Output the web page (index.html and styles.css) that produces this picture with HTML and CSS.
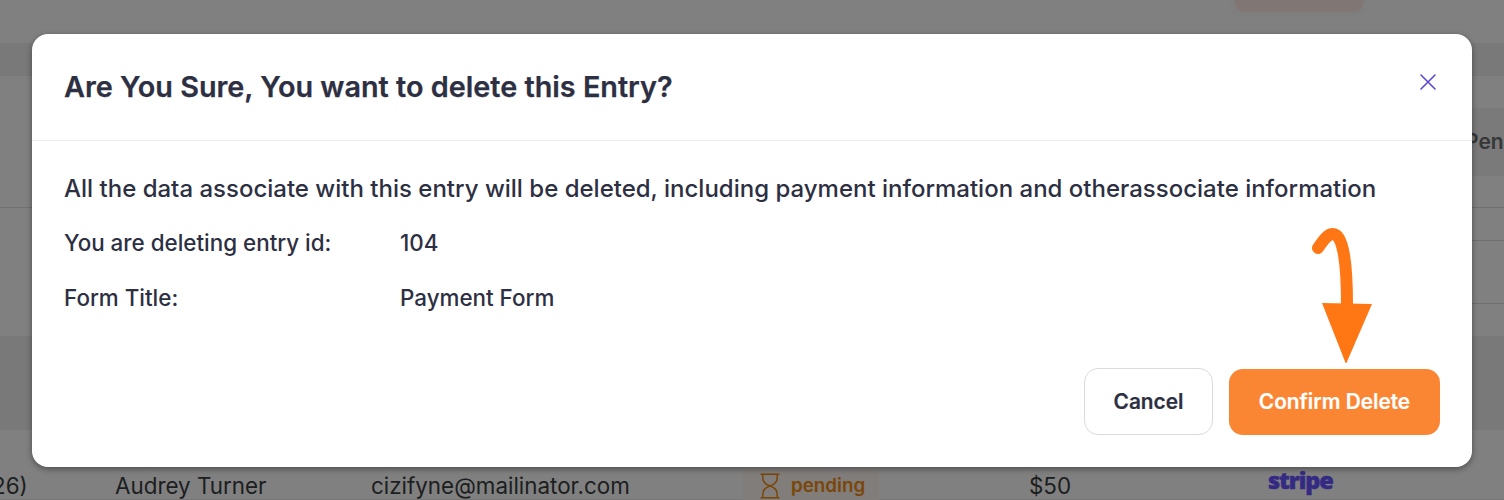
FILE: index.html
```html
<!DOCTYPE html>
<html lang="en">
<head>
<meta charset="utf-8">
<title>Delete entry</title>
<link rel="stylesheet" href="styles.css">
</head>
<body>
<div class="page">
  <div class="topbar"><span class="top-button"></span></div>
  <div class="strip"></div>
  <div class="stats">
    <div class="stats-left"></div>
    <div class="stats-right">
      <div class="stat-head">Pen</div>
      <div class="stat-gap"></div>
      <div class="stat-cell"></div>
      <div class="stat-cell tall"></div>
    </div>
  </div>
  <div class="table-head"></div>
  <div class="row">
    <span class="cell date">26)</span>
    <span class="cell name">Audrey Turner</span>
    <span class="cell mail">cizifyne@mailinator.com</span>
    <span class="cell status"><span class="badge">
      <svg class="hourglass" viewBox="0 0 20 26"><path d="M.5 1.2h19M.5 24.8h19M2.8 1.2v3.3c0 5 2.8 7.2 7.2 8.5 4.4-1.3 7.2-3.5 7.2-8.5V1.2M2.8 24.8v-3.3c0-5 2.8-7.2 7.2-8.5 4.4 1.3 7.2 3.5 7.2 8.5v3.3"/></svg>
      <span class="badge-text">pending</span></span></span>
    <span class="cell amount">$50</span>
    <span class="cell stripe">stripe</span>
  </div>
</div>
<div class="modal" role="dialog">
  <header class="modal-head">
    <h1 class="title">Are You Sure, You want to delete this Entry?</h1>
    <svg class="close" viewBox="0 0 16 16"><path d="M1 1l14 14M15 1L1 15"/></svg>
  </header>
  <div class="modal-body">
    <p class="notice">All the data associate with this entry will be deleted, including payment information and otherassociate information</p>
    <dl class="details">
      <dt class="label">You are deleting entry id:</dt><dd class="value">104</dd>
      <dt class="label">Form Title:</dt><dd class="value form">Payment Form</dd>
    </dl>
  </div>
  <footer class="actions">
    <button class="btn cancel"><span class="cancel-text">Cancel</span></button>
    <button class="btn confirm"><span class="confirm-text">Confirm Delete</span></button>
  </footer>
</div>
<svg class="arrow" viewBox="0 0 62 138"><path class="arrow-line" d="M8 23C14 14 18 9 23 9C34 9 37 43 37 80"/><path class="arrow-head" d="M12 78L62 79L36 139Z"/></svg>
</body>
</html>
```

FILE: styles.css
```css
* { box-sizing: border-box; }
body { margin: 0; width: 1504px; height: 500px; overflow: hidden; position: relative; font-family: Inter, "Liberation Sans", sans-serif; color: #2d2f42; }
.page { height: 500px; background: #808080; display: flex; flex-direction: column; }
.topbar { height: 43px; display: flex; justify-content: flex-end; padding-right: 140px; }
.top-button { width: 130px; height: 12px; background: #807774; border-radius: 0 0 12px 12px; box-shadow: 0 1px 4px #80777480; }
.strip { height: 33px; background: #797979; }
.stats { height: 260px; display: flex; }
.stats-left { flex: 1; height: 132px; border-bottom: 1px solid #717171; }
.stats-right { width: 64px; padding-top: 32px; }
.stat-head { height: 68px; background: #7a7a7a; padding-left: 25px; line-height: 67px; font-size: 21px; font-weight: 600; color: #363738; white-space: nowrap; overflow: hidden; }
.stat-gap { height: 32px; border-bottom: 1px solid #6e6e6e; }
.stat-cell { height: 33px; border-bottom: 1px solid #6e6e6e; }
.tall { height: 63px; }
.table-head { height: 94px; background: #797979; }
.row { height: 70px; display: grid; grid-template-columns: 115px 256px 372px 286px 239px 1fr; padding-top: 40px; border-bottom: 1px solid #777; color: #1c1e20; font-size: 22.4px; line-height: 32px; }
.cell { white-space: nowrap; }
.date { margin-left: -8px; }
.badge { display: inline-flex; align-items: center; width: 136px; height: 31px; padding-left: 17px; gap: 11px; background: #807d7a; color: #7a4609; font-size: 18.8px; font-weight: 600; vertical-align: top; }
.badge-text { line-height: 31px; }
.hourglass { width: 20px; height: 26px; margin-top: 1px; fill: none; stroke: #7a4609; stroke-width: 1.5; }
.stripe { color: #342a83; font-family: "Open Sans", sans-serif; font-size: 23.5px; font-weight: 800; line-height: 20px; letter-spacing: -1.1px; -webkit-text-stroke: .5px #342a83; }
.modal { position: absolute; left: 32px; top: 34px; width: 1440px; height: 433px; border-radius: 16px; background: #fff; box-shadow: 0 2px 6px rgba(0,0,0,.4); display: flex; flex-direction: column; }
.modal-head { height: 107px; border-bottom: 1px solid #ebebec; padding: 0 36.5px 0 32px; display: flex; justify-content: space-between; align-items: center; }
.title { margin: 0; font-size: 28.8px; font-weight: 600; line-height: 36px; -webkit-text-stroke: .25px #2d2f42; }
.close { width: 16px; height: 16px; margin-top: -11px; fill: none; stroke: #6248cf; stroke-width: 1.6; stroke-linecap: round; }
.modal-body { padding: 32px 32px 0; flex: 1; }
.notice { margin: 0; font-size: 24px; font-weight: 500; line-height: 32px; white-space: nowrap; }
.details { margin: 22px 0 0; display: grid; grid-template-columns: 336px auto; row-gap: 23px; font-size: 22.4px; font-weight: 500; line-height: 32px; justify-content: start; }
.value { margin: 0; }
.actions { display: flex; justify-content: flex-end; gap: 16px; padding: 0 32px 32px; align-items: flex-end; }
.btn { height: 66px; border-radius: 14px; border: 0; font-family: inherit; font-size: 20.8px; font-weight: 600; padding: 0; }
.cancel { width: 129px; height: 67px; border: 1px solid #dadbdd; background: #fff; color: #2d2f42; -webkit-text-stroke: .2px #2d2f42; }
.confirm { width: 211px; background: #fa8532; color: #fff; padding-bottom: 2px; -webkit-text-stroke: .2px #fff; }
.arrow { position: absolute; left: 1310px; top: 225px; width: 62px; height: 138px; }
.arrow-line { fill: none; stroke: #ff7614; stroke-width: 12; stroke-linecap: round; }
.arrow-head { fill: #ff7614; }
```
